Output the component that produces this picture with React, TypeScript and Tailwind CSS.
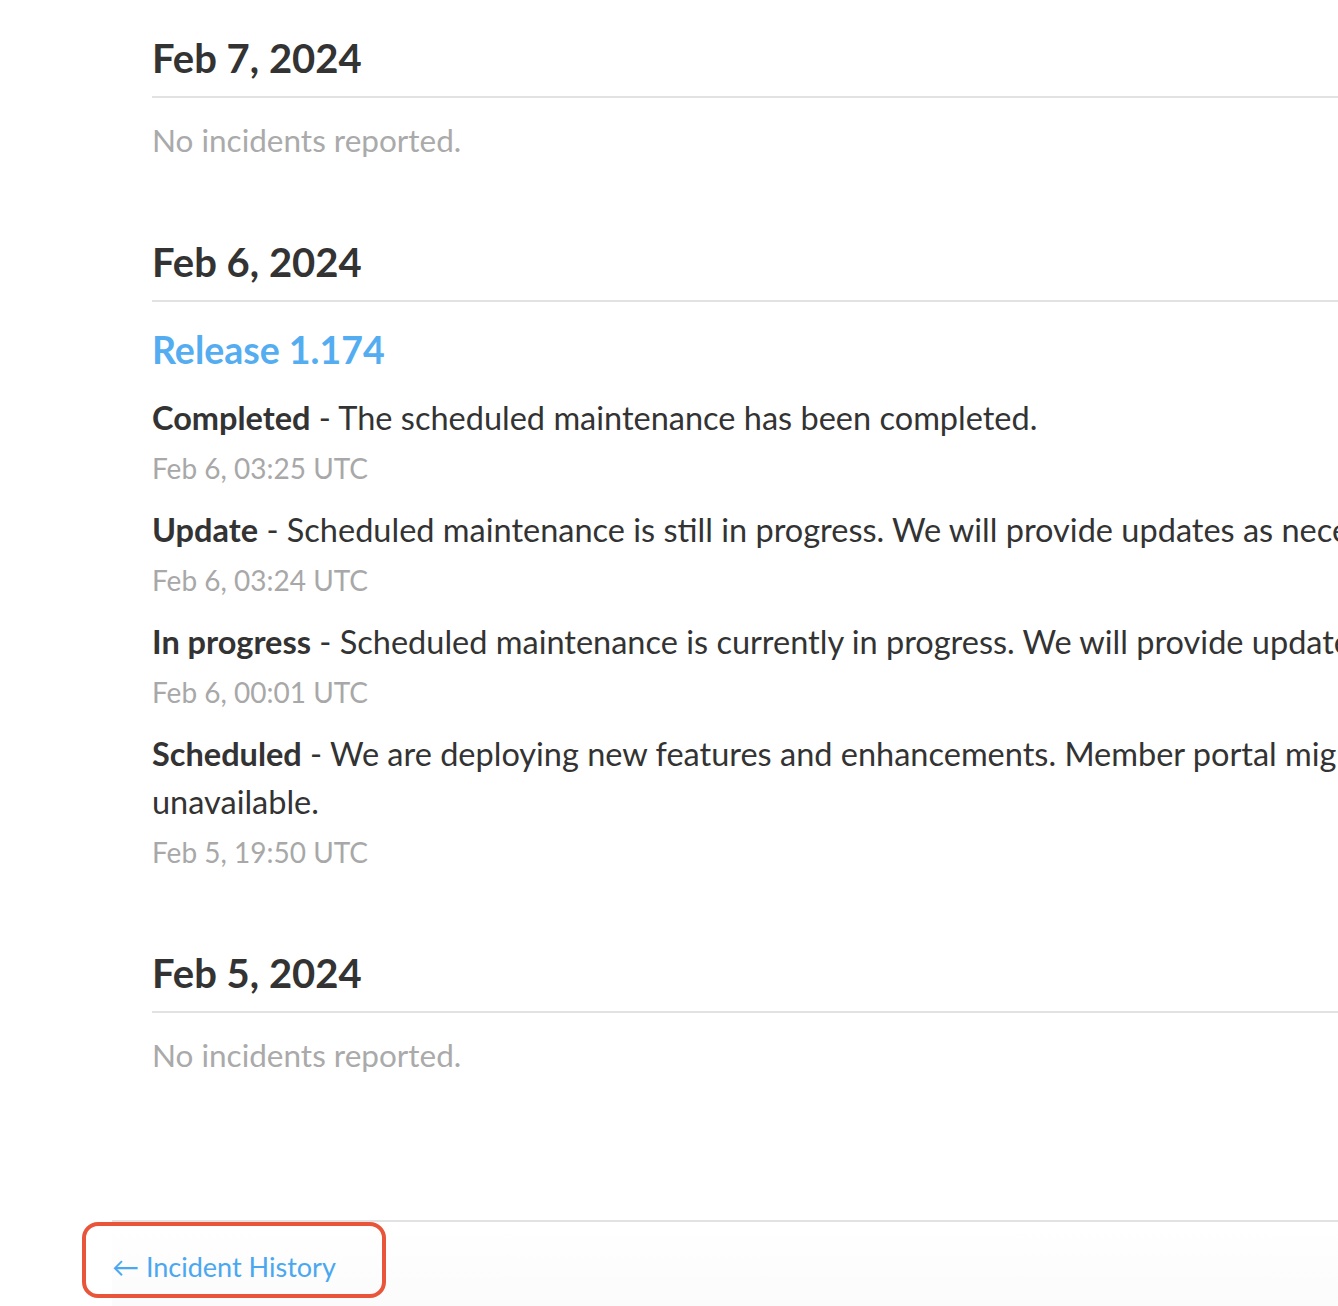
const font = "font-['Lato','Noto_Sans',sans-serif]";

type Update = { label: string; text: string; time: string };

const updates: Update[] = [
  { label: "Completed", text: "The scheduled maintenance has been completed.", time: "Feb 6, 03:25 UTC" },
  {
    label: "Update",
    text: "Scheduled maintenance is still in progress. We will provide updates as necessary.",
    time: "Feb 6, 03:24 UTC",
  },
  {
    label: "In progress",
    text: "Scheduled maintenance is currently in progress. We will provide updates as necessary.",
    time: "Feb 6, 00:01 UTC",
  },
  {
    label: "Scheduled",
    text: "We are deploying new features and enhancements. Member portal might be unavailable.",
    time: "Feb 5, 19:50 UTC",
  },
];

const DayHeading = ({ children }: { children: string }) => (
  <h2 className="text-[40px] leading-[48px] font-bold text-[#333] pb-[14px] border-b-2 border-[#e2e2e2]">
    {children}
  </h2>
);

const NoIncidents = () => (
  <p className="mt-[22px] text-[31.5px] leading-[40px] text-[#aaa]">No incidents reported.</p>
);

export default function App() {
  return (
    <div className={`relative w-full h-[1306px] overflow-hidden bg-white ${font}`}>
      <div className="ml-[152px] w-[1428px] pt-[34px]">
        {/* Feb 7 */}
        <section>
          <DayHeading>Feb 7, 2024</DayHeading>
          <NoIncidents />
        </section>

        {/* Feb 6 */}
        <section className="mt-[78px]">
          <DayHeading>Feb 6, 2024</DayHeading>
          <h3 className="mt-[24px] text-[37.5px] leading-[48px] font-bold text-[#55adf1]">Release 1.174</h3>
          <div className="mt-[1px]">
            {updates.map((u) => (
              <div key={u.label} className="mt-[20px]">
                <p className="text-[32.5px] leading-[48px] text-[#333]">
                  <strong className="font-bold">{u.label}</strong> - {u.text}
                </p>
                <p className="mt-[8px] text-[28px] leading-[36px] text-[#a8a8a8]">{u.time}</p>
              </div>
            ))}
          </div>
        </section>

        {/* Feb 5 */}
        <section className="mt-[79px]">
          <DayHeading>Feb 5, 2024</DayHeading>
          <NoIncidents />
        </section>
      </div>

      {/* footer */}
      <div className="ml-[112px] mt-[145px] w-[1400px] border-t-2 border-[#e2e2e2] bg-gradient-to-b from-white to-[#f6f6f6] pt-[25px] h-[200px]">
        <a className="text-[27px] leading-[40px] text-[#4aa8f0]">← Incident History</a>
      </div>

      {/* highlight */}
      <div className="absolute left-[82px] top-[1222px] w-[304px] h-[76px] border-[4px] border-[#e8553a] rounded-[16px]" />
    </div>
  );
}
